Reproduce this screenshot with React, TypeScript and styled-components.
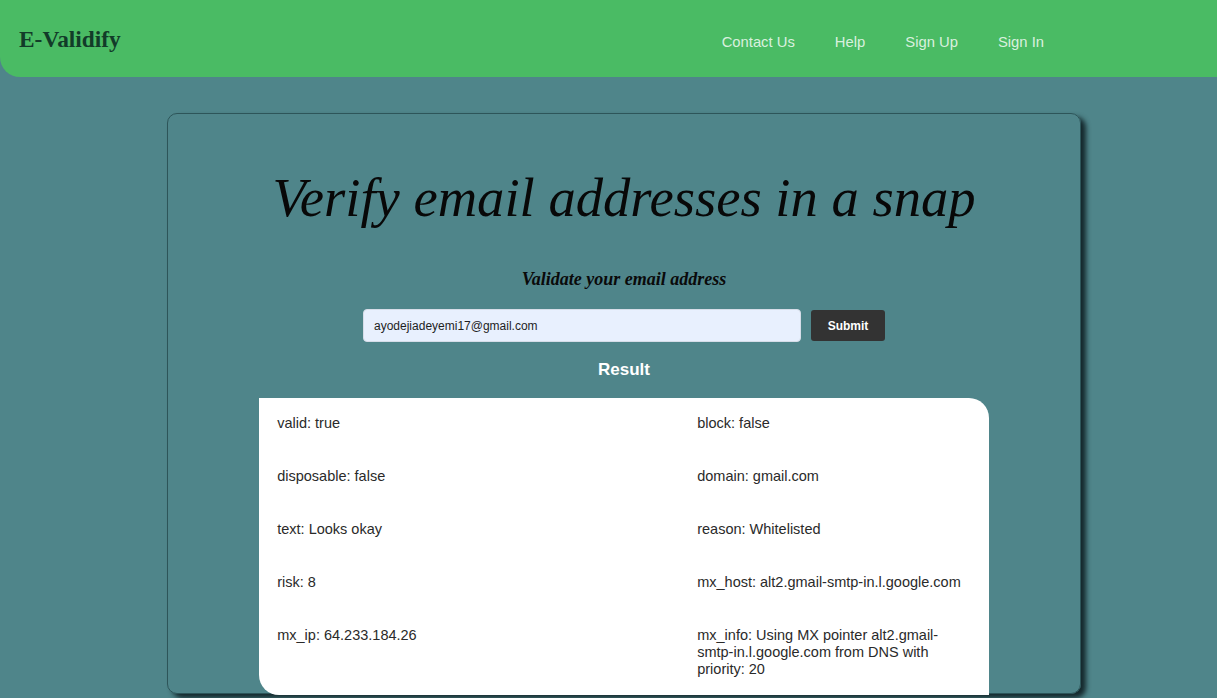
import React from 'react';
import styled, { createGlobalStyle } from 'styled-components';

const GlobalStyle = createGlobalStyle`
  html, body { margin: 0; padding: 0; background: #4f858a; }
  body { font-family: "Liberation Sans", Arial, sans-serif; overflow: hidden; }
`;

const Page = styled.div`
  min-height: 698px;
  background: #4f858a;
`;

const Header = styled.header`
  height: 77px;
  box-sizing: border-box;
  background: #4abb64;
  border-bottom-left-radius: 20px;
  display: flex;
  align-items: center;
  justify-content: space-between;
  padding: 0 173px 0 19px;
`;

const Logo = styled.div`
  font-family: "Liberation Serif", "Times New Roman", serif;
  font-weight: 700;
  font-size: 23.4px;
  padding-top: 2px;
  color: #123b29;
`;

const Nav = styled.nav`
  display: flex;
  gap: 40px;
  padding-top: 6px;
`;

const NavLink = styled.a`
  font-size: 14.8px;
  color: rgba(255, 255, 255, 0.8);
  text-decoration: none;
`;

const Card = styled.main`
  width: 914px;
  height: 581px;
  box-sizing: border-box;
  margin: 36px 0 0 167px;
  border: 1px solid #2d5559;
  border-radius: 10px;
  box-shadow: 5px 4px 5px rgba(10, 25, 28, 0.85);
  display: flex;
  flex-direction: column;
  align-items: center;
`;

const Title = styled.h1`
  margin: 52px 0 0;
  font-family: "Liberation Serif", "Times New Roman", serif;
  font-style: italic;
  font-weight: 400;
  font-size: 54.6px;
  line-height: 64px;
  color: #080808;
`;

const Subtitle = styled.h2`
  margin: 39px 0 0;
  font-family: "Liberation Serif", "Times New Roman", serif;
  font-style: italic;
  font-weight: 700;
  font-size: 18px;
  line-height: 20px;
  color: #0a0a0a;
`;

const Form = styled.form`
  display: flex;
  align-items: center;
  gap: 10px;
  margin-top: 20px;
`;

const Input = styled.input`
  width: 438px;
  height: 33px;
  box-sizing: border-box;
  border: 1px solid #d6dde8;
  border-radius: 4px;
  background: #e8f0fe;
  padding: 0 10px;
  font-family: "Liberation Sans", Arial, sans-serif;
  font-size: 12px;
  color: #1e1e1e;
  outline: none;
`;

const Button = styled.button`
  width: 74px;
  height: 31px;
  border: none;
  border-radius: 3px;
  background: #333333;
  color: #ffffff;
  font-family: "Liberation Sans", Arial, sans-serif;
  font-weight: 700;
  font-size: 12px;
`;

const ResultTitle = styled.h3`
  margin: 18px 0 0;
  font-size: 17px;
  line-height: 20px;
  font-weight: 700;
  color: #ffffff;
`;

const ResultBox = styled.section`
  flex-shrink: 0;
  width: 80%;
  margin-top: 18px;
  box-sizing: border-box;
  background: #ffffff;
  border-radius: 0 20px 0 20px;
  padding: 17px 19px 17px 18px;
  display: grid;
  grid-template-columns: 420px 1fr;
  row-gap: 36px;
`;

const Item = styled.div`
  font-size: 14.5px;
  line-height: 17px;
  color: #2a2a2a;
`;

const results: [string, string][] = [
  ['valid', 'true'],
  ['block', 'false'],
  ['disposable', 'false'],
  ['domain', 'gmail.com'],
  ['text', 'Looks okay'],
  ['reason', 'Whitelisted'],
  ['risk', '8'],
  ['mx_host', 'alt2.gmail-smtp-in.l.google.com'],
  ['mx_ip', '64.233.184.26'],
  ['mx_info', 'Using MX pointer alt2.gmail-smtp-in.l.google.com from DNS with priority: 20'],
];

export default function App() {
  return (
    <Page>
      <GlobalStyle />
      <Header>
        <Logo>E-Validify</Logo>
        <Nav>
          <NavLink href="#">Contact Us</NavLink>
          <NavLink href="#">Help</NavLink>
          <NavLink href="#">Sign Up</NavLink>
          <NavLink href="#">Sign In</NavLink>
        </Nav>
      </Header>
      <Card>
        <Title>Verify email addresses in a snap</Title>
        <Subtitle>Validate your email address</Subtitle>
        <Form onSubmit={(e) => e.preventDefault()}>
          <Input type="email" defaultValue="ayodejiadeyemi17@gmail.com" />
          <Button type="submit">Submit</Button>
        </Form>
        <ResultTitle>Result</ResultTitle>
        <ResultBox>
          {results.map(([k, v]) => (
            <Item key={k}>{`${k}: ${v}`}</Item>
          ))}
        </ResultBox>
      </Card>
    </Page>
  );
}
